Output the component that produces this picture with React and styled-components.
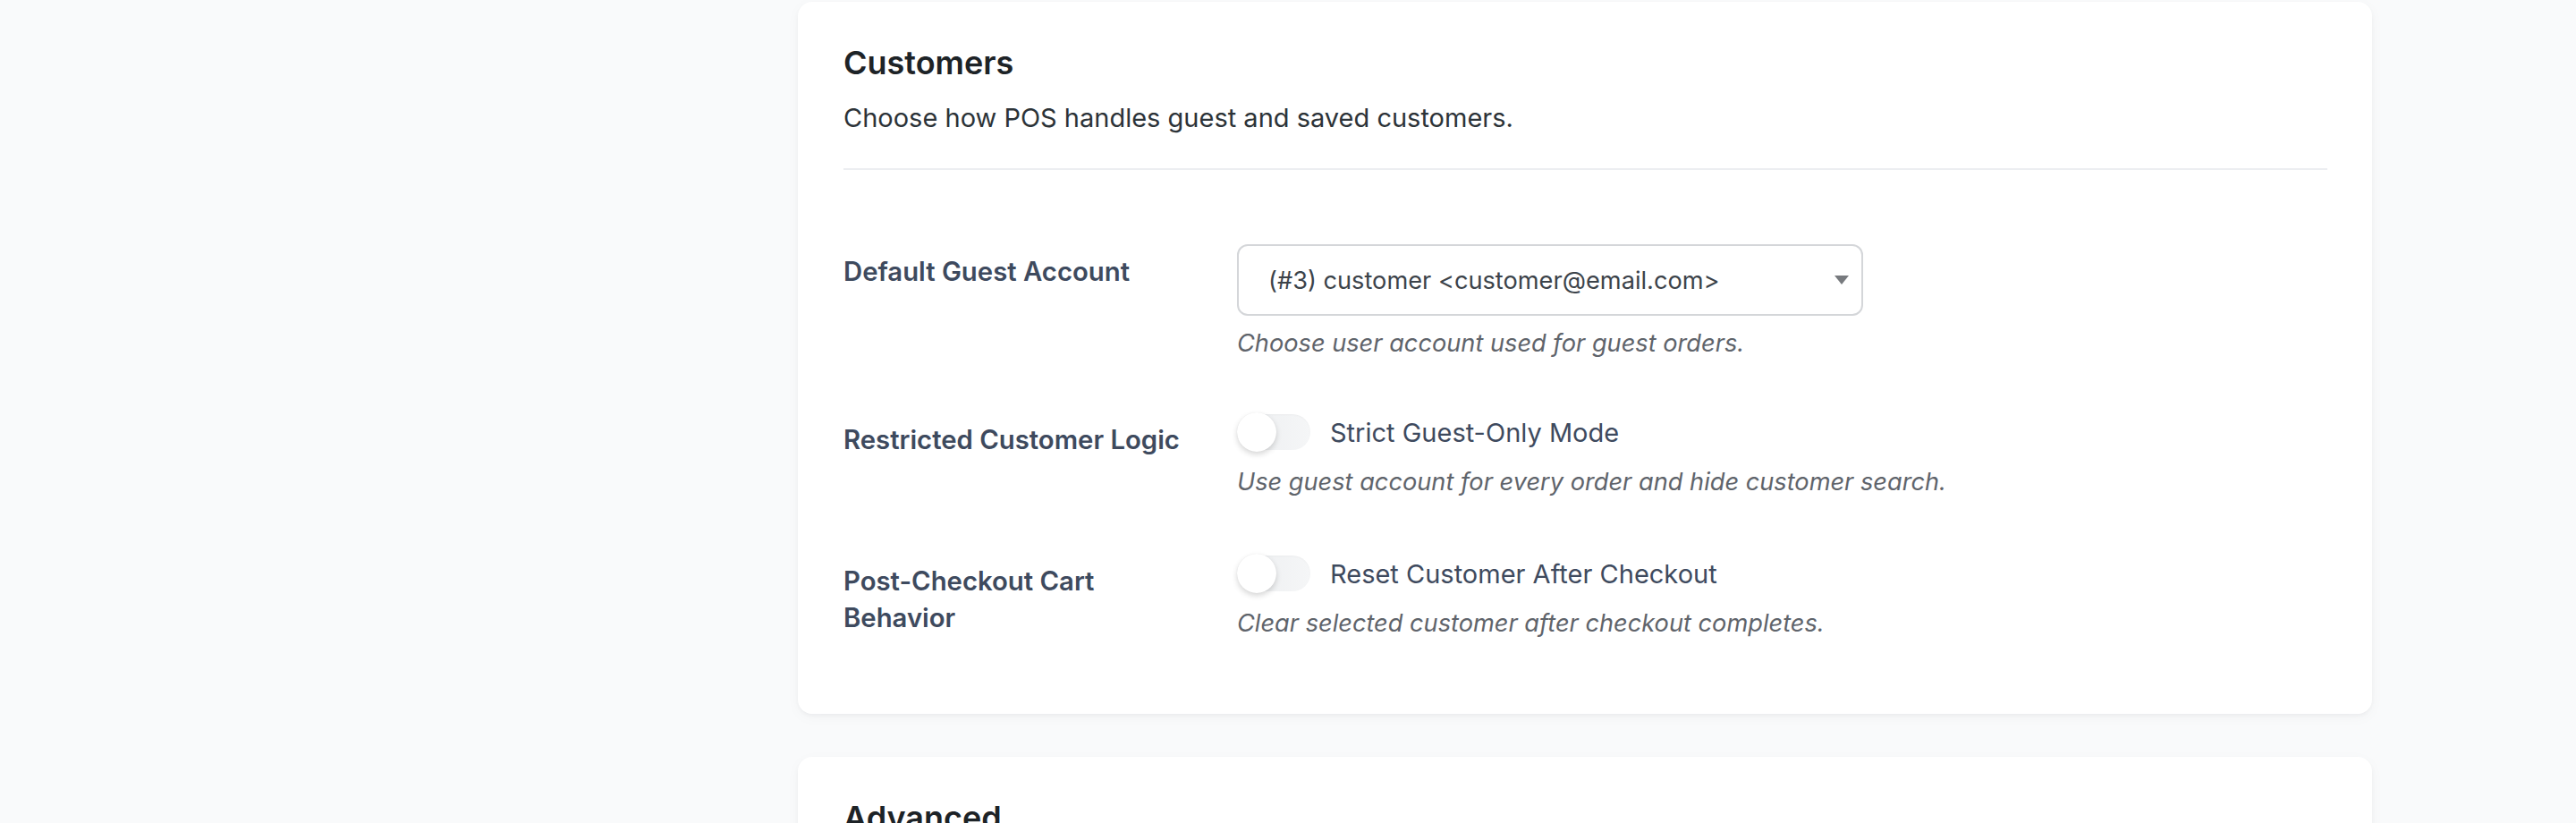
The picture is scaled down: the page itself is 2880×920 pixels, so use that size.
import React from 'react';
import styled, { createGlobalStyle } from 'styled-components';

const GlobalStyle = createGlobalStyle`
  html, body {
    margin: 0;
    padding: 0;
    background: #f9fafb;
  }
  body {
    font-family: Inter, "Noto Sans", "Liberation Sans", sans-serif;
    -webkit-font-smoothing: antialiased;
  }
`;

const Page = styled.div`
  min-height: 920px;
  padding: 2px 0 0 892px;
  display: flex;
  flex-direction: column;
  gap: 48px;
`;

const Card = styled.section`
  width: 1760px;
  box-sizing: border-box;
  background: #fff;
  border-radius: 16px;
  padding: 46px 50px 51px 51px;
  box-shadow: 0 2px 4px rgba(15, 23, 42, 0.04), 0 4px 16px rgba(15, 23, 42, 0.03);
`;

const Header = styled.header`
  padding-bottom: 36px;
  border-bottom: 2px solid #eceef1;
`;

const Title = styled.h2`
  margin: 0;
  font-size: 36px;
  line-height: 44px;
  font-weight: 600;
  color: #1d2327;
`;

const Subtitle = styled.p`
  margin: 20px 0 0;
  font-size: 29px;
  line-height: 40px;
  color: #2c3338;
`;

const Rows = styled.div`
  padding-top: 53px;
`;

const Row = styled.div`
  display: grid;
  grid-template-columns: 440px 1fr;
  align-items: start;
`;

const Label = styled.div`
  padding: 40px 40px 0 0;
  font-size: 29.3px;
  line-height: 41px;
  font-weight: 600;
  color: #3e4a5e;
`;

const Control = styled.div`
  padding: 30px 0 ${({ $pb = 30 }) => $pb}px;
  display: flex;
  flex-direction: column;
  align-items: flex-start;
`;

const Select = styled.div`
  width: 700px;
  height: 80px;
  box-sizing: border-box;
  border: 2px solid #d4d6d9;
  border-radius: 12px;
  padding: 0 14px 0 33px;
  display: flex;
  align-items: center;
  justify-content: space-between;
  font-size: 27.2px;
  color: #3c434a;
  background: #fff;
`;

const Arrow = styled.svg`
  width: 16px;
  height: 10px;
  fill: #777a7e;
`;

const Description = styled.p`
  margin: ${({ $gap }) => $gap}px 0 0;
  font-size: 27.2px;
  line-height: 40px;
  font-style: italic;
  color: #5f646b;
`;

const ToggleRow = styled.label`
  display: flex;
  align-items: center;
  gap: 22px;
  height: 44px;
  font-size: 29px;
  color: #3e4a5e;
`;

const Track = styled.span`
  width: 82px;
  height: 40px;
  border-radius: 20px;
  background: linear-gradient(90deg, #eceef0, #f5f6f7);
  box-shadow: inset 0 1px 2px rgba(0, 0, 0, 0.03);
  display: flex;
  align-items: center;
`;

const Knob = styled.span`
  width: 44px;
  height: 44px;
  border-radius: 50%;
  background: #fff;
  box-shadow: 0 3px 6px rgba(0, 0, 0, 0.16), 0 0 1px rgba(0, 0, 0, 0.08);
  margin-left: ${({ $on }) => ($on ? '38px' : '0')};
`;

function Toggle({ on, children }) {
  return (
    <ToggleRow>
      <Track>
        <Knob $on={on} />
      </Track>
      {children}
    </ToggleRow>
  );
}

export default function App() {
  return (
    <>
      <GlobalStyle />
      <Page>
        <Card>
          <Header>
            <Title>Customers</Title>
            <Subtitle>Choose how POS handles guest and saved customers.</Subtitle>
          </Header>
          <Rows>
            <Row>
              <Label>Default Guest Account</Label>
              <Control $pb={27}>
                <Select>
                  <span>(#3) customer &lt;customer@email.com&gt;</span>
                  <Arrow viewBox="0 0 16 10">
                    <path d="M0 0h16L8 10z" />
                  </Arrow>
                </Select>
                <Description $gap={11}>Choose user account used for guest orders.</Description>
              </Control>
            </Row>
            <Row>
              <Label>Restricted Customer Logic</Label>
              <Control>
                <Toggle>Strict Guest-Only Mode</Toggle>
                <Description $gap={14}>Use guest account for every order and hide customer search.</Description>
              </Control>
            </Row>
            <Row>
              <Label>Post-Checkout Cart Behavior</Label>
              <Control>
                <Toggle>Reset Customer After Checkout</Toggle>
                <Description $gap={14}>Clear selected customer after checkout completes.</Description>
              </Control>
            </Row>
          </Rows>
        </Card>
        <Card>
          <Header>
            <Title>Advanced</Title>
            <Subtitle>Fine-tune POS behavior for your store.</Subtitle>
          </Header>
        </Card>
      </Page>
    </>
  );
}
